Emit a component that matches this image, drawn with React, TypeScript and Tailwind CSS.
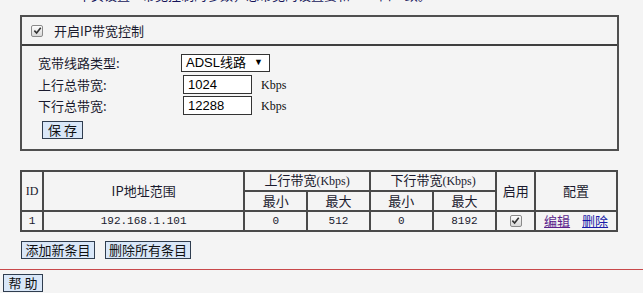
import React from 'react'

const cjk = "font-['SimSun','Noto_Sans_CJK_SC',sans-serif]"
const serif = "font-['Liberation_Serif','Noto_Sans_CJK_SC',serif]"
const mono = "font-['Liberation_Mono','Noto_Sans_CJK_SC',monospace]"

function CheckMark() {
  return (
    <span className="inline-flex h-[12px] w-[12px] items-center justify-center rounded-[2px] border border-[#8a8a8a] bg-gradient-to-b from-[#fdfdfd] to-[#d8d8d8]">
      <svg viewBox="0 0 10 10" className="h-[9px] w-[9px]">
        <path d="M1.5 5.2 L4 7.8 L8.6 2" fill="none" stroke="#333" strokeWidth="1.8" />
      </svg>
    </span>
  )
}

function Btn({ children, className = '' }: { children: React.ReactNode; className?: string }) {
  return (
    <button
      className={`h-[18px] whitespace-nowrap border border-[#2f3d4f] bg-[#d9e7f8] px-0 text-center text-[13px] leading-[16px] text-[#111] ${cjk} ${className}`}
    >
      {children}
    </button>
  )
}

const cell = 'border-2 border-[#4a4a4a] p-0 text-center font-normal'

export default function App() {
  return (
    <div className={`h-[293px] w-[643px] overflow-hidden bg-[#f4f4f4] text-[13px] text-[#1a1a2e] ${cjk}`}>
      {/* cut-off intro line */}
      <div className="h-[15px] overflow-hidden pl-[78px]">
        <p className="-mt-[13px] whitespace-nowrap leading-[15px] text-[#14145a]">
          本页设置IP带宽控制的参数，总带宽的设置要和WAN口一致。
        </p>
      </div>

      {/* settings panel */}
      <div className="ml-[20px] w-[599px] border-2 border-[#4f4f4f]">
        <div className="flex h-[29px] items-center gap-[11px] border-b-2 border-[#3f3f3f] pl-[9px]">
          <CheckMark />
          <span>开启IP带宽控制</span>
        </div>
        <div className="flex flex-col pb-[9px] pl-[16px] pt-[7px]">
          <div className="flex h-[19px] items-center">
            <span className="w-[143px]">宽带线路类型:</span>
            <div className="flex h-[18px] w-[89px] items-center justify-between border border-[#333] bg-white pl-[4px] pr-[6px] font-['Liberation_Sans','Noto_Sans_CJK_SC',sans-serif] text-[13px] text-black">
              <span>ADSL线路</span>
              <span className="text-[9px]">▼</span>
            </div>
          </div>
          <div className="mt-[3px] flex h-[19px] items-center">
            <span className="w-[145px]">上行总带宽:</span>
            <div className="flex h-[19px] w-[69px] items-center border border-[#333] bg-white pl-[4px] font-['Liberation_Sans',sans-serif] text-black">
              1024
            </div>
            <span className={`ml-[9px] text-[12px] text-[#111] ${serif}`}>Kbps</span>
          </div>
          <div className="mt-[2px] flex h-[19px] items-center">
            <span className="w-[145px]">下行总带宽:</span>
            <div className="flex h-[19px] w-[69px] items-center border border-[#333] bg-white pl-[4px] font-['Liberation_Sans',sans-serif] text-black">
              12288
            </div>
            <span className={`ml-[9px] text-[12px] text-[#111] ${serif}`}>Kbps</span>
          </div>
          <div className="mt-[5px] pl-[4px]">
            <Btn className="w-[41px]">保 存</Btn>
          </div>
        </div>
      </div>

      {/* rules table */}
      <table className="ml-[20px] mt-[19px] w-[598px] border-collapse border-2 border-[#4a4a4a] text-[13px] leading-[16px]">
        <colgroup>
          <col className="w-[22px]" />
          <col className="w-[202px]" />
          <col className="w-[63px]" />
          <col className="w-[63px]" />
          <col className="w-[63px]" />
          <col className="w-[64px]" />
          <col className="w-[39px]" />
          <col className="w-[82px]" />
        </colgroup>
        <thead>
          <tr className="h-[20px]">
            <th rowSpan={2} className={`${cell} ${serif} text-[12px]`}>ID</th>
            <th rowSpan={2} className={cell}>IP地址范围</th>
            <th colSpan={2} className={cell}>
              上行带宽<span className={`${serif} text-[12px]`}>(Kbps)</span>
            </th>
            <th colSpan={2} className={cell}>
              下行带宽<span className={`${serif} text-[12px]`}>(Kbps)</span>
            </th>
            <th rowSpan={2} className={cell}>启用</th>
            <th rowSpan={2} className={cell}>配置</th>
          </tr>
          <tr className="h-[20px]">
            <th className={cell}>最小</th>
            <th className={cell}>最大</th>
            <th className={cell}>最小</th>
            <th className={cell}>最大</th>
          </tr>
        </thead>
        <tbody>
          <tr className={`h-[20px] text-[11px] ${mono}`}>
            <td className={cell}>1</td>
            <td className={cell}>192.168.1.101</td>
            <td className={cell}>0</td>
            <td className={cell}>512</td>
            <td className={cell}>0</td>
            <td className={cell}>8192</td>
            <td className={cell}>
              <div className="flex justify-center">
                <CheckMark />
              </div>
            </td>
            <td className={`${cell} ${cjk} text-[13px]`}>
              <a className="text-[#5a1f8c] underline">编辑</a>
              <a className="ml-[12px] text-[#1a1aa8] underline">删除</a>
            </td>
          </tr>
        </tbody>
      </table>

      <div className="ml-[21px] mt-[9px] flex gap-[10px]">
        <Btn className="w-[74px]">添加新条目</Btn>
        <Btn className="w-[86px]">删除所有条目</Btn>
      </div>

      <div className="mt-[10px] h-px w-full bg-[#c8484a]" />

      <div className="ml-[3px] mt-[3px]">
        <Btn className="w-[40px]">帮 助</Btn>
      </div>
    </div>
  )
}
